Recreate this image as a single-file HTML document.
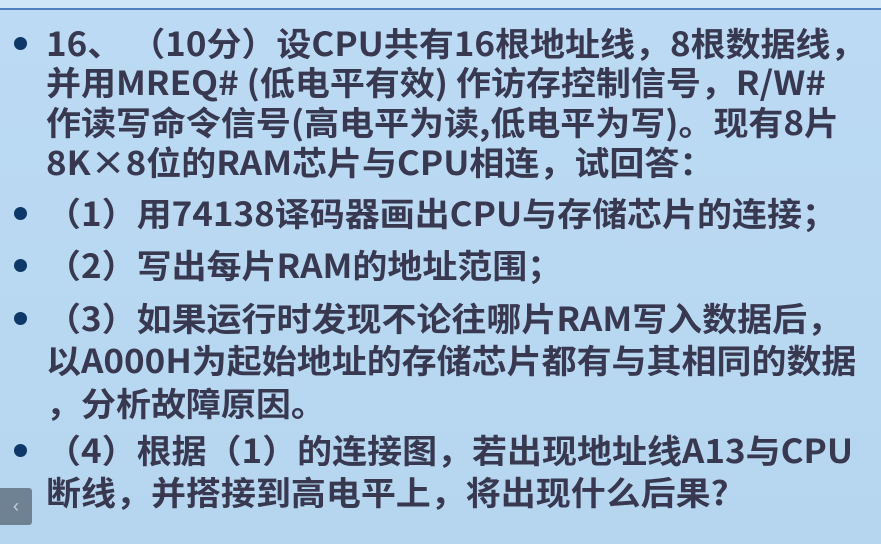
<!DOCTYPE html>
<html><head><meta charset="utf-8"><style>
html,body{margin:0;padding:0}
body{width:881px;height:544px;overflow:hidden;position:relative;background:linear-gradient(180deg,#bcdaf3 0%,#b6d6f0 100%);font-family:"Liberation Sans","Noto Sans CJK SC",sans-serif;}
.top{position:absolute;left:0;top:0;width:881px;height:8px;background:#cfe6f9}
.line{position:absolute;left:0;top:8px;width:881px;height:2px;background:#4f7fbf}
.t{position:absolute;left:46px;font-weight:bold;font-size:33px;color:#383850;white-space:nowrap;line-height:40px;font-family:"Noto Sans CJK SC",sans-serif;transform:scaleX(1.06);transform-origin:0 0}
.b{position:absolute;left:14px;width:13px;height:13px;border-radius:50%;background:#0d3868}
.nav{position:absolute;left:0;top:488px;width:32px;height:37px;background:#6f8294;border-radius:0 3px 3px 0;color:#c8d2dc;font-size:18px;line-height:37px;text-align:center}
</style></head><body>
<div class="top"></div><div class="line"></div>
<div class="b" style="top:37px"></div>
<div class="t" style="top:22px">16、 （10分）设CPU共有16根地址线，8根数据线，</div>
<div class="t" style="top:61px">并用MREQ# (低电平有效) 作访存控制信号，R/W#</div>
<div class="t" style="top:101px">作读写命令信号(高电平为读,低电平为写)。现有8片</div>
<div class="t" style="top:141px">8K×8位的RAM芯片与CPU相连，试回答：</div>
<div class="b" style="top:207px"></div>
<div class="t" style="top:192px">（1）用74138译码器画出CPU与存储芯片的连接；</div>
<div class="b" style="top:259px"></div>
<div class="t" style="top:244px">（2）写出每片RAM的地址范围；</div>
<div class="b" style="top:312px"></div>
<div class="t" style="top:297px">（3）如果运行时发现不论往哪片RAM写入数据后，</div>
<div class="t" style="top:339px">以A000H为起始地址的存储芯片都有与其相同的数据</div>
<div class="t" style="top:382px">，分析故障原因。</div>
<div class="b" style="top:444px"></div>
<div class="t" style="top:429px">（4）根据（1）的连接图，若出现地址线A13与CPU</div>
<div class="t" style="top:471px">断线，并搭接到高电平上，将出现什么后果?</div>
<div class="nav">‹</div>
</body></html>
